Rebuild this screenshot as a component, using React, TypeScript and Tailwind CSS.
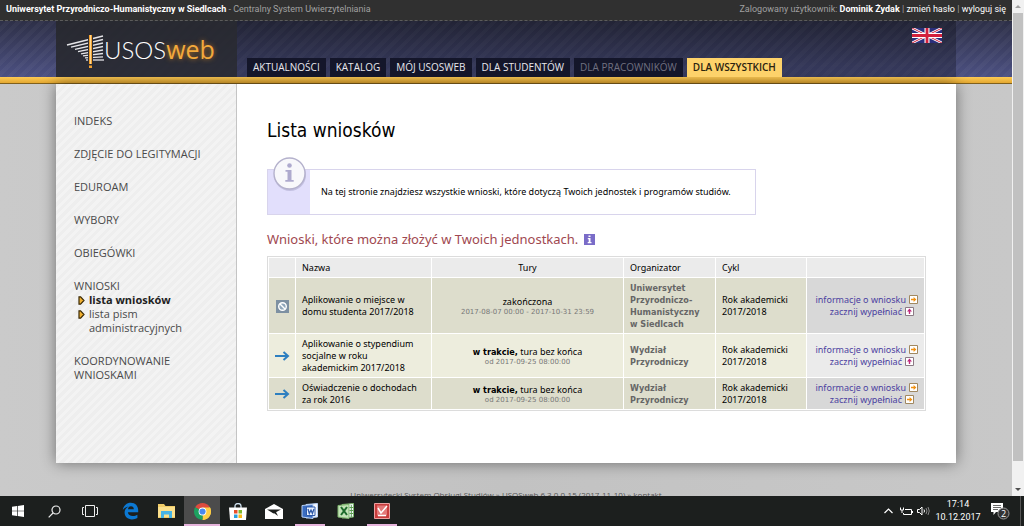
import type { ReactNode } from "react";
import clsx from "clsx";

interface Tab { label: string; state?: "active" | "muted" }

interface Request {
  open: boolean;
  name: string;
  round: ReactNode;
  dates: string;
  organizer: string;
  fillIcon: "right" | "up";
}

const TABS: Tab[] = [
  { label: "AKTUALNOŚCI" },
  { label: "KATALOG" },
  { label: "MÓJ USOSWEB" },
  { label: "DLA STUDENTÓW" },
  { label: "DLA PRACOWNIKÓW", state: "muted" },
  { label: "DLA WSZYSTKICH", state: "active" },
];

const MENU = ["INDEKS", "ZDJĘCIE DO LEGITYMACJI", "EDUROAM", "WYBORY", "OBIEGÓWKI"];

const ongoing = <><b className="font-['DejaVu_Sans_Condensed','DejaVu_Sans',sans-serif] text-black">w trakcie,</b> tura bez końca</>;

const REQUESTS: Request[] = [
  { open: false, name: "Aplikowanie o miejsce w domu studenta 2017/2018", round: "zakończona", dates: "2017-08-07 00:00 - 2017-10-31 23:59", organizer: "Uniwersytet Przyrodniczo-Humanistyczny w Siedlcach", fillIcon: "up" },
  { open: true, name: "Aplikowanie o stypendium socjalne w roku akademickim 2017/2018", round: ongoing, dates: "od 2017-09-25 08:00:00", organizer: "Wydział Przyrodniczy", fillIcon: "up" },
  { open: true, name: "Oświadczenie o dochodach za rok 2016", round: ongoing, dates: "od 2017-09-25 08:00:00", organizer: "Wydział Przyrodniczy", fillIcon: "right" },
];

const STRIPES = "bg-[repeating-linear-gradient(135deg,transparent_0_4px,rgba(255,255,255,0.03)_4px_8px)]";

function Logo() {
  return (
    <a href="#" aria-label="USOSweb" className="flex h-full items-center pl-[10px]">
      <svg width="38" height="40" viewBox="0 0 38 40" className="shrink-0">
        <g stroke="#e4e4e8" strokeWidth="1.3" fill="none">
          <path d="M1 16 L37 7" />
          <path d="M5 18.2 L37 10.5" />
          <path d="M9 20.4 L37 14" />
          <path d="M12 22.6 L37 17.5" />
          <path d="M15 24.8 L37 21" />
          <path d="M17 26.8 L37 24.5" />
          <path d="M19 28.8 L37 27.8" />
          <path d="M20 31 L38 31" />
        </g>
        <path d="M24.5 6 V34" stroke="#2c2d35" strokeWidth="5" />
        <path d="M24.5 6 V35" stroke="#f0a030" strokeWidth="3" />
        <path d="M24.5 6 V35" stroke="#ffd890" strokeWidth="1" />
        <path d="M24.5 36.5 V39" stroke="#f0a030" strokeWidth="3" />
      </svg>
      <span className="flex items-baseline">
        <span className="font-['Lato'] text-[24px] leading-8 font-light text-white">USOS</span>
        <span className="font-['Open_Sans'] text-[25px] leading-8 text-[#f2a93c] [text-shadow:0_0_5px_rgba(240,150,30,0.7)]">web</span>
      </span>
    </a>
  );
}

function UnionJack() {
  return (
    <svg width="30" height="15" viewBox="0 0 30 15">
      <path d="M0 0h30v15H0z" fill="#2b2f7c" />
      <path d="M0 0l30 15M30 0L0 15" stroke="#fff" strokeWidth="2.6" />
      <path d="M0 0l30 15M30 0L0 15" stroke="#d2203c" strokeWidth="1" />
      <path d="M15 0v15M0 7.5h30" stroke="#fff" strokeWidth="5" />
      <path d="M15 0v15M0 7.5h30" stroke="#d2203c" strokeWidth="2.8" />
    </svg>
  );
}

function Bullet() {
  return (
    <svg width="7" height="9" viewBox="0 0 7 9" className="mt-[3px] shrink-0">
      <path d="M1 .8h1.6L6 4.5 2.6 8.2H1z" fill="#f0b030" stroke="#3a2a08" strokeWidth="1.2" />
    </svg>
  );
}

function LinkIcon({ kind }: { kind: "right" | "up" }) {
  const color = kind === "up" ? "#c0287c" : "#f09010";
  return (
    <svg width="9" height="9" viewBox="0 0 9 9" className="ml-[3px] inline-block align-[-1px]">
      <path d="M.5.5h8v8h-8z" fill="#fff" stroke={kind === "up" ? "#8a7a84" : "#a08860"} />
      {kind === "up"
        ? <path d="M4.5 1.6L7 4.4H5.2V7H3.8V4.4H2z" fill={color} />
        : <path d="M7.4 4.5L4.6 7V5.2H2V3.8h2.6V2z" fill={color} />}
    </svg>
  );
}

function StatusIcon({ open }: { open: boolean }) {
  if (open) {
    return (
      <svg width="16" height="10" viewBox="0 0 16 10" className="mx-auto" fill="none" stroke="#2d7fc0" strokeWidth="2">
        <path d="M1 5h12.5M9.5 1L14 5 9.5 9" />
      </svg>
    );
  }
  return (
    <svg width="13" height="13" viewBox="0 0 13 13" className="mx-auto">
      <path d="M0 0h13v13H0z" fill="#7d90a2" />
      <circle cx="6.5" cy="6.5" r="3.8" fill="#8fa6ba" stroke="#fff" strokeWidth="1.4" />
      <path d="M4 4l5 5" stroke="#fff" strokeWidth="1.4" />
    </svg>
  );
}

function Sidebar() {
  return (
    <nav className="w-[181px] shrink-0 border-r border-[#c4c4c4] bg-[#eeeeee] bg-[repeating-linear-gradient(135deg,transparent_0_3px,rgba(255,255,255,0.3)_3px_6px)] pt-[30px] pr-8 pl-[18px] font-['Open_Sans',sans-serif] text-[11px] leading-[14px] text-[#4a4a4a]">
      <ul className="space-y-[19px]">
        {MENU.map(m => <li key={m} className="whitespace-nowrap"><a href="#">{m}</a></li>)}
        <li>
          <a href="#">WNIOSKI</a>
          <ul className="pl-1">
            <li className="flex gap-1"><Bullet /><a href="#" className="font-bold text-[#222]">lista wniosków</a></li>
            <li className="flex gap-1"><Bullet /><a href="#">lista pism administracyjnych</a></li>
          </ul>
        </li>
        <li><a href="#">KOORDYNOWANIE WNIOSKAMI</a></li>
      </ul>
    </nav>
  );
}

function InfoBox() {
  return (
    <div className="relative mt-[27px] flex h-[46px] w-[489px] items-center border border-[#d8d4ec] bg-white">
      <div className="h-full w-[42px] shrink-0 bg-[#e2dffc]" />
      <svg width="36" height="36" viewBox="0 0 36 36" className="absolute -top-[14px] left-1">
        <circle cx="18" cy="19" r="16" fill="#8a86b0" opacity="0.35" />
        <circle cx="17.5" cy="17.5" r="15.5" fill="#f8f8fb" stroke="#b4b1cc" strokeWidth="1.4" />
        <circle cx="17.5" cy="9.5" r="2.3" fill="#aeaace" />
        <path d="M13.5 14h6v10h2.2v1.8h-8.4V24h2.2v-8.2h-2z" fill="#aeaace" />
      </svg>
      <p className="pl-[11px]">Na tej stronie znajdziesz wszystkie wnioski, które dotyczą Twoich jednostek i programów studiów.</p>
    </div>
  );
}

function RequestTable() {
  return (
    <table className="mt-[7px] w-full table-fixed border-separate border-spacing-px border border-[#dcdcdc] text-left leading-3 [&_td]:px-[6px] [&_td]:pt-1 [&_td]:pb-[3px] [&_th]:px-[6px] [&_th]:font-normal">
      <colgroup>
        <col className="w-[26px]" />
        <col className="w-[135px]" />
        <col />
        <col className="w-[91px]" />
        <col className="w-[90px]" />
        <col className="w-[117px]" />
      </colgroup>
      <thead>
        <tr className="h-[19px] bg-[#ebebeb]">
          <th aria-label="Status" />
          <th>Nazwa</th>
          <th className="text-center">Tury</th>
          <th>Organizator</th>
          <th>Cykl</th>
          <th aria-label="Akcje" />
        </tr>
      </thead>
      <tbody>
        {REQUESTS.map((r, i) => (
          <tr key={r.name} className={i % 2 ? "bg-[#ededdd]" : "bg-[#ddddcc]"}>
            <td className="!px-0"><StatusIcon open={r.open} /></td>
            <td className="!pr-3">{r.name}</td>
            <td className="text-center">
              {r.round}
              <div className="font-['DejaVu_Sans',sans-serif] text-[7px] leading-[9px] text-[#777]">{r.dates}</div>
            </td>
            <td className="font-['DejaVu_Sans_Condensed','DejaVu_Sans',sans-serif] font-bold text-[#666]">{r.organizer}</td>
            <td>Rok akademicki 2017/2018</td>
            <td className={clsx("text-right whitespace-nowrap text-[#4a3fa0]", i % 2 ? "bg-[#ebebeb]" : "bg-[#d8d8d8]")}>
              <a href="#" className="block">informacje o wniosku<LinkIcon kind="right" /></a>
              <a href="#" className="block pr-1">zacznij wypełniać<LinkIcon kind={r.fillIcon} /></a>
            </td>
          </tr>
        ))}
      </tbody>
    </table>
  );
}

function OfficeIcon({ color, light, children }: { color: string; light: string; children: ReactNode }) {
  return (
    <svg width="18" height="17" viewBox="0 0 18 17">
      <path d="M5 1.5L16.5 .5V14L5 15z" fill="#f4f8ff" stroke={light} />
      <path d="M1 2.5L12 1.5V15.5L1 14z" fill={color} stroke={light} />
      {children}
    </svg>
  );
}

const APPS: { name: string; running?: boolean; active?: boolean; icon: ReactNode }[] = [
  { name: "Edge", icon: (
    <svg width="17" height="18" viewBox="0 0 17 18">
      <path d="M.8 8C1.5 3.4 4.8.8 8.8.8c4.8 0 7.4 3.4 7.4 7.6v1.8H5.9c.2 2.6 2.3 3.8 4.8 3.8 1.9 0 3.4-.5 4.7-1.3v3.4c-1.5.8-3.3 1.3-5.4 1.3-4.4 0-7.4-2.6-7.4-6.8 0-2.9 1.6-5 4-6.2C4 4.8 1.9 6 .8 8zM6 7.2h5.8C11.8 5.4 10.8 4.3 9 4.3S6.2 5.5 6 7.2z" fill="#0c78d2" />
    </svg>
  ) },
  { name: "Eksplorator plików", icon: (
    <svg width="17" height="14" viewBox="0 0 17 14">
      <path d="M0 0h6l1.5 2H17v12H0z" fill="#f0cc68" />
      <path d="M0 3h17v10H0z" fill="#fbe08c" />
      <path d="M3 14V7h11v7h-3v-3.5H6V14z" fill="#46b4e6" />
    </svg>
  ) },
  { name: "Chrome", running: true, active: true, icon: (
    <svg width="17" height="17" viewBox="0 0 17 17">
      <path d="M8.5 8.5L1.14 4.25A8.5 8.5 0 0 1 15.86 4.25z" fill="#dd4b3e" />
      <path d="M8.5 8.5L15.86 4.25A8.5 8.5 0 0 1 8.5 17z" fill="#ffce44" />
      <path d="M8.5 8.5L8.5 17A8.5 8.5 0 0 1 1.14 4.25z" fill="#1da160" />
      <path d="M8.5 4.6h7.5a8.5 8.5 0 0 1-7.5 12.4l3.4-6.5z" fill="#ffce44" />
      <circle cx="8.5" cy="8.5" r="3.9" fill="#fff" />
      <circle cx="8.5" cy="8.5" r="3.1" fill="#4a88ee" />
    </svg>
  ) },
  { name: "Sklep", icon: (
    <svg width="18" height="17" viewBox="0 0 18 17">
      <path d="M6 5V3a3 2.5 0 0 1 6 0v2" fill="none" stroke="#cfe0ee" strokeWidth="1.3" />
      <path d="M0 4.5h18L17 17H1z" fill="#fff" />
      <path d="M5 7h3.5v3.5H5z" fill="#e8502c" />
      <path d="M9.5 7H13v3.5H9.5z" fill="#7cb82c" />
      <path d="M5 11.5h3.5V15H5z" fill="#28a0e0" />
      <path d="M9.5 11.5H13V15H9.5z" fill="#f8b818" />
    </svg>
  ) },
  { name: "Poczta", icon: (
    <svg width="18" height="15" viewBox="0 0 18 15">
      <path d="M0 5L9 0l9 5v10H0z" fill="#fff" />
      <path d="M2 5.5h14L8.5 9.5z" fill="#1c1f1e" />
      <path d="M7.5 8L13 12 10.5 7z" fill="#1c1f1e" />
    </svg>
  ) },
  { name: "Word", running: true, icon: (
    <OfficeIcon color="#3a6cc0" light="#b8d0f4">
      <path d="M5.5 4h8.5v8.5H5.5z" fill="#eaf2ff" stroke="#2c58a8" />
      <path d="M7 6l1.3 4.5L10 7l1.4 3.5L13 6" fill="none" stroke="#2c58a8" strokeWidth="1.3" />
    </OfficeIcon>
  ) },
  { name: "Excel", icon: (
    <OfficeIcon color="#c4e4b8" light="#7cb46c">
      <path d="M4 4l6 8M10 4l-6 8" stroke="#1e6c2c" strokeWidth="2" />
      <path d="M12.5 4.5H16M12.5 7.5H16M12.5 10.5H16M14.3 2v12" stroke="#5a9c50" />
    </OfficeIcon>
  ) },
  { name: "Notatnik", running: true, icon: (
    <svg width="16" height="16" viewBox="0 0 16 16">
      <path d="M.5.5h15v15H.5z" fill="#c83c3c" stroke="#eca0a0" />
      <path d="M3 2.5h10v10H3z" fill="#e47878" />
      <path d="M4 5l3 5L13 3M4 12.5h8" fill="none" stroke="#fff" strokeWidth="1.5" />
    </svg>
  ) },
];

function Taskbar() {
  return (
    <footer className="flex h-[30px] shrink-0 items-stretch bg-[#1c1f1e] font-['Open_Sans',sans-serif] text-white [&_button]:flex [&_button]:items-center [&_button]:justify-center">
      <button aria-label="Start" className="w-9">
        <svg width="12" height="12" viewBox="0 0 12 12" fill="#fff">
          <path d="M0 1.7L5 1v4.7H0zM5.7.9L12 0v5.7H5.7zM0 6.3h5V11l-5-.7zM5.7 6.3H12V12l-6.3-.9z" />
        </svg>
      </button>
      <button aria-label="Szukaj" className="w-9">
        <svg width="13" height="13" viewBox="0 0 13 13" fill="none" stroke="#eee" strokeWidth="1.2">
          <circle cx="8" cy="5" r="4" /><path d="M5 8L.7 12.3" />
        </svg>
      </button>
      <button aria-label="Widok zadań" className="mr-1 w-9">
        <svg width="16" height="12" viewBox="0 0 16 12" fill="none" stroke="#eee">
          <path d="M3.5.5h9v11h-9zM2 2.5H.5v7H2M14 2.5h1.5v7H14" />
        </svg>
      </button>
      {APPS.map(a => (
        <button key={a.name} aria-label={a.name} className={clsx("relative w-9", a.active && "bg-[#4c4c4c]")}>
          {a.icon}
          {a.running && <span className={clsx("absolute bottom-0 h-[2px] bg-[#e6b4dc]", a.active ? "inset-x-0" : "inset-x-[3px]")} />}
        </button>
      ))}
      <div className="ml-auto flex items-center">
        <button aria-label="Pokaż ukryte ikony" className="w-[18px]">
          <svg width="9" height="6" viewBox="0 0 9 6" fill="none" stroke="#fff" strokeWidth="1.2"><path d="M.5 5L4.5 1l4 4" /></svg>
        </button>
        <button aria-label="Bateria" className="w-[18px]">
          <svg width="13" height="9" viewBox="0 0 13 9" fill="none" stroke="#fff"><path d="M5 2.5h6.5v5h-8V6M12.5 4v2M.5.5v2.5h3V.5M2 3v3" /></svg>
        </button>
        <button aria-label="Głośność" className="w-[17px]">
          <svg width="13" height="10" viewBox="0 0 13 10" fill="none" stroke="#fff">
            <path d="M.5 3.5h2L5 1v8L2.5 6.5h-2zM7 3.5q1 1.5 0 3" /><path d="M9 2q2 3 0 6M11 1q2.5 4 0 8" stroke="#888" />
          </svg>
        </button>
        <time className="w-[52px] text-center font-['Roboto',sans-serif] text-[9px] leading-[13px]">17:14<br />10.12.2017</time>
        <button aria-label="Powiadomienia: 2" className="w-[32px]">
          <svg width="20" height="18" viewBox="0 0 20 18">
            <path d="M1 1h12v9H6l-2.5 3v-3H1z" fill="#fff" />
            <path d="M3 3.5h8M3 5.5h8M3 7.5h5" stroke="#444" strokeWidth=".8" />
            <circle cx="13.5" cy="11.5" r="5.5" fill="#333" stroke="#999" />
            <text x="13.5" y="15" textAnchor="middle" fontSize="9" fill="#fff" fontFamily="Open Sans">2</text>
          </svg>
        </button>
        <span className="mr-[3px] ml-1 h-[30px] w-px bg-[#555]" />
      </div>
    </footer>
  );
}

export default function App() {
  return (
    <div className="flex h-screen flex-col overflow-hidden bg-[#c6c6c6]">
      <div className="flex min-h-0 flex-1">
        <div className="min-w-0 flex-1 overflow-hidden bg-[linear-gradient(to_right,#cacaca,#c2c2c2_50%,#c8c8c8)] font-['Noto_Sans',sans-serif] text-[9px] text-black">
          <div className="flex h-[21px] items-center justify-between border-b border-dashed border-[#5c5c5c] bg-[#303030] px-[6px] font-['Roboto',sans-serif] whitespace-nowrap text-[#a0a0a0]">
            <p><b className="text-white">Uniwersytet Przyrodniczo-Humanistyczny w Siedlcach</b> - Centralny System Uwierzytelniania</p>
            <p>
              Zalogowany użytkownik: <b className="text-white">Dominik Żydak</b> | <a href="#" className="text-white">zmień hasło</a> | <a href="#" className="text-white">wyloguj się</a>
            </p>
          </div>
          <header className="bg-linear-to-b from-[#2e3048] to-[#50558a]">
            <div className={STRIPES}>
              <div className="mx-auto flex h-14 w-[900px] max-w-full bg-black/25">
                <div className="w-[181px] shrink-0 bg-[#292a30]/85"><Logo /></div>
                <nav className="flex items-end gap-1 pl-[10px] font-['Open_Sans',sans-serif] text-[10px] leading-[19px] whitespace-nowrap">
                  {TABS.map(t => (
                    <a
                      key={t.label}
                      href="#"
                      className={clsx(
                        "px-[6px]",
                        t.state === "active" ? "bg-[#fdd26a] font-semibold text-[#2a2210]" : "bg-[#14162a]",
                        t.state === "muted" && "text-[#707080]",
                        !t.state && "text-[#e8e8ee]",
                      )}
                    >
                      {t.label}
                    </a>
                  ))}
                </nav>
                <a href="#" aria-label="English" className="mt-[7px] mr-[14px] ml-auto"><UnionJack /></a>
              </div>
            </div>
            <div className="h-[7px] border-b border-[#80601c] bg-linear-to-b from-[#fdca54] to-[#e4a830]" />
          </header>
          <div className="mx-auto flex w-[900px] max-w-full bg-white shadow-[0_0_14px_rgba(0,0,0,0.45)]">
            <Sidebar />
            <main className="min-w-0 flex-1 pt-[34px] pr-[30px] pb-[52px] pl-[30px]">
              <h1 className="font-['DejaVu_Sans_Condensed','DejaVu_Sans',sans-serif] text-[19px] leading-6">Lista wniosków</h1>
              <InfoBox />
              <h2 className="mt-[14px] flex items-center gap-[6px] text-[13px] leading-5 text-[#a04850]">
                Wnioski, które można złożyć w Twoich jednostkach.
                <button aria-label="Informacja" className="h-[11px] w-[11px] bg-[#7a6cc8]">
                  <svg width="11" height="11" viewBox="0 0 11 11" fill="#fff"><path d="M4.5 1.5h2v1.5h-2zM3.8 4h2.7v4h1v1.2H3.7V8h1V5.2h-.9z" /></svg>
                </button>
              </h2>
              <RequestTable />
            </main>
          </div>
          <p className="mt-[26px] text-center font-['Open_Sans',sans-serif] text-[8px] leading-3 text-[#555]">
            Uniwersytecki System Obsługi Studiów » USOSweb 6.3.0.0-15 (2017-11-10) » <a href="#">kontakt</a>
          </p>
        </div>
        <div className="flex w-3 shrink-0 flex-col items-center bg-[#f1f1f1]">
          <svg width="12" height="13" viewBox="0 0 12 13"><path d="M3 8l3-3 3 3z" fill="#a0a0a0" /></svg>
          <div className="mb-[22px] w-[10px] flex-1 bg-[#c1c1c1]" />
          <svg width="12" height="13" viewBox="0 0 12 13"><path d="M3 5l3 3 3-3z" fill="#505050" /></svg>
        </div>
      </div>
      <Taskbar />
    </div>
  );
}
